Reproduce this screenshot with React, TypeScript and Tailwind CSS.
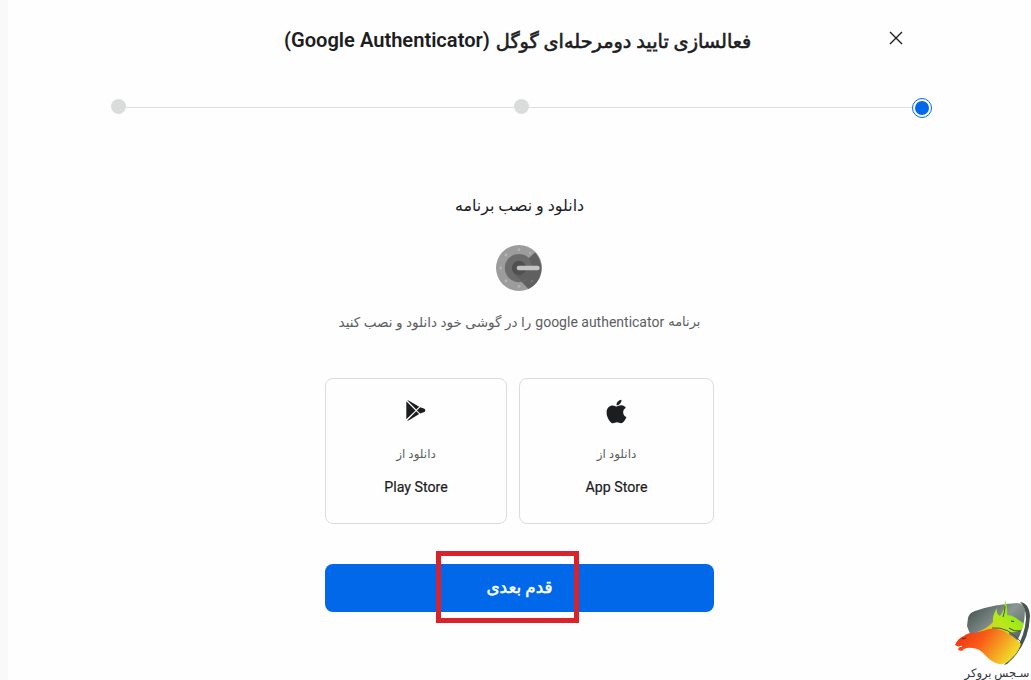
import React from "react";
import { FaApple } from "react-icons/fa";

interface StoreCardProps {
  name: string;
  icon: React.ReactNode;
  className: string;
}

const StoreCard: React.FC<StoreCardProps> = ({ name, icon, className }) => (
  <button
    type="button"
    className={`flex h-[146px] flex-col items-center rounded-lg border border-[#dcdcdc] pt-5 ${className}`}
  >
    <span className="flex h-6 items-center justify-center">{icon}</span>
    <span className="mt-[21px] text-[12px] leading-5 whitespace-nowrap text-[#5c5e5e]">
      دانلود از
    </span>
    <span
      dir="ltr"
      className="mt-[13px] text-[14.2px] leading-5 text-[#1b1d1d] [-webkit-text-stroke:0.2px_#1b1d1d]"
    >
      {name}
    </span>
  </button>
);

const PlayIcon = () => (
  <svg width="20" height="21" viewBox="0 0 20 21" fill="#1b1d1f" className="-mt-px">
    <path d="M.3 1.3v18L9.5 10.4z" />
    <path d="M1.3.3 10.2 9.6l3-2.9L3 .7Q2-.1 1.3.3z" />
    <path d="M1.3 20.6 10.2 11.2l3 2.9L3 20.2q-1 .7-1.7.4z" />
    <path d="m14.2 7.2-3.3 3.2 3.3 3.2 4.2-1.6q1.8-1.6 0-3.2z" />
  </svg>
);

const AuthenticatorIcon = () => (
  <svg width="46" height="46" viewBox="0 0 46 46">
    <circle cx="23" cy="23" r="23" fill="#9c9c9c" />
    <path d="m33 13 6-5.5A23 23 0 0 1 32.5 44L17 28z" fill="#606060" />
    <path d="M33 13A14.2 14.2 0 1 0 33 33.2L37 23z" fill="#6b6b6b" />
    <path d="m17 28 6-5 14-2-4 12.2-7 3z" fill="#606060" />
    <circle cx="23" cy="23" r="7.2" fill="#505050" />
    <g fill="#b5b5b5">
      <circle cx="23" cy="4.7" r="1.4" />
      <circle cx="10" cy="10" r="1.4" />
      <circle cx="4.7" cy="23" r="1.4" />
      <circle cx="10" cy="36" r="1.4" />
      <circle cx="23" cy="41.3" r="1.4" />
      <circle cx="34" cy="8" r="1.1" />
    </g>
    <circle cx="36" cy="36" r="1.2" fill="#777" />
    <rect x="20.7" y="20.8" width="23" height="4.4" rx="2.2" fill="#c3c3c3" />
  </svg>
);

const BrokerLogo = () => (
  <svg width="80" height="66" viewBox="0 0 80 66">
    <defs>
      <linearGradient id="shield" x1="0" y1="0" x2="1" y2="1">
        <stop offset="0" stopColor="#3c4946" />
        <stop offset=".45" stopColor="#8b9793" />
        <stop offset="1" stopColor="#35413d" />
      </linearGradient>
      <linearGradient id="bull" x1="0" y1="1" x2="1" y2="0">
        <stop offset="0" stopColor="#ffb21c" />
        <stop offset=".5" stopColor="#b8e81b" />
        <stop offset="1" stopColor="#69ed12" />
      </linearGradient>
      <linearGradient id="bear" x1="0" y1="0" x2="1" y2=".4">
        <stop offset="0" stopColor="#e92a11" />
        <stop offset=".45" stopColor="#fa5a17" />
        <stop offset="1" stopColor="#f0d829" />
      </linearGradient>
    </defs>
    <path d="M17 18q1-5 7-7Q44 4 66 3q7 0 8 7 0 27-22 50Q24 52 16 26z" fill="url(#shield)" />
    <path d="M69 2q9 1 10 14-1 29-23 48l-3 1q20-21 22-46 0-12-6-17z" fill="#46534f" />
    <path
      d="M26 32q10-3 16-10-1-6 4-14-1 6 3 8 5-6 5-16 3 8 2 15 5 0 9 3l7 5q1 3-1 6-4 4-13 3 0 5 4 10L40 30z"
      fill="url(#bull)"
    />
    <path
      d="M4 45q3-7 9-9 5-4 12-3l13-4q10-1 18 4 9 5 14 11-3 9-10 15-5 6-12 5-8-2-14-9-6-7-13-7-7-1-10 3l-4-1 1-3z"
      fill="url(#bear)"
    />
    <path d="M41 28q16-2 30 15M52 17q2-5 2-11" stroke="#475246" strokeWidth="1" fill="none" />
    <path d="m11 39 4-1M60 21l3 .5M58 28q5 4 11 3" stroke="#29412b" strokeWidth="1" fill="none" />
    <path d="m5 48 6-2" stroke="#fefefe" />
  </svg>
);

export default function App() {
  return (
    <div
      dir="rtl"
      className="relative h-[680px] w-[1031px] overflow-hidden border-l-8 border-[#f9f9fa] bg-[#fefefe] font-[Roboto,'DejaVu_Sans',sans-serif] text-[#1b1d1f]"
    >
      <header className="flex h-20 items-center justify-between pr-[127px] pl-[276px]">
        <button type="button" aria-label="بستن" className="-mt-1">
          <svg width="16" height="16" viewBox="0 0 16 16" stroke="#1b1d1f" strokeWidth="1.4">
            <path d="m2 2 12 12M14 2 2 14" />
          </svg>
        </button>
        <h1 className="flex items-center gap-1.5 text-[20.1px] font-semibold whitespace-nowrap">
          <span className="pt-[3px] text-[19.3px] leading-7 font-normal [-webkit-text-stroke:0.6px_#1b1d1f]">
            فعالسازی تایید دومرحله‌ای گوگل
          </span>
          <span dir="ltr">(Google Authenticator)</span>
        </h1>
      </header>

      {/* Stepper */}
      <div className="mt-[17px] flex h-[21px] items-center pr-[99px] pl-[103px]">
        <div className="flex size-5 items-center justify-center rounded-full border border-[#0068e9] bg-white">
          <div className="size-3.5 rounded-full bg-[#0068e9]" />
        </div>
        <div className="h-px w-[383px] bg-[#dfdfdf]" />
        <div className="-mt-0.5 size-[15px] rounded-full bg-[#dadcdc]" />
        <div className="h-px flex-1 bg-[#dfdfdf]" />
        <div className="-mt-0.5 size-[15px] rounded-full bg-[#dadcdc]" />
      </div>

      <main className="mr-[317px] flex w-[389px] flex-col items-center">
        <h2 className="mt-[76px] text-[15.9px] leading-6 font-normal whitespace-nowrap">
          دانلود و نصب برنامه
        </h2>
        <div className="mt-[27px] mr-px">
          <AuthenticatorIcon />
        </div>
        <p className="mt-[21px] flex items-center gap-1 text-[14px] leading-5 whitespace-nowrap text-[#5c5e5e]">
          <span className="text-[13px]">برنامه</span>
          <span dir="ltr">google authenticator</span>
          <span className="text-[13.6px]">را در گوشی خود دانلود و نصب کنید</span>
        </p>

        <div className="mt-[46px] flex w-full justify-between">
          <StoreCard
            name="App Store"
            className="w-[195px]"
            icon={<FaApple className="size-[27px] shrink-0 text-[#1b1d1f]" />}
          />
          <StoreCard name="Play Store" className="w-[182px]" icon={<PlayIcon />} />
        </div>

        <button
          type="button"
          className="relative mt-10 h-12 w-full rounded-lg bg-[#0068e9] text-[16.8px] font-normal text-white [-webkit-text-stroke:0.5px_white]"
        >
          قدم بعدی
          <span className="absolute -top-[13px] left-[111px] h-[72px] w-[143px] border-5 border-[#d8222c]" />
        </button>
      </main>

      <div className="absolute right-0 bottom-0 flex w-20 flex-col items-center">
        <BrokerLogo />
        <span className="-mr-3 text-[11.5px] leading-[14px] whitespace-nowrap text-[#34343c]">
          سـجس بروکر
        </span>
      </div>
    </div>
  );
}
